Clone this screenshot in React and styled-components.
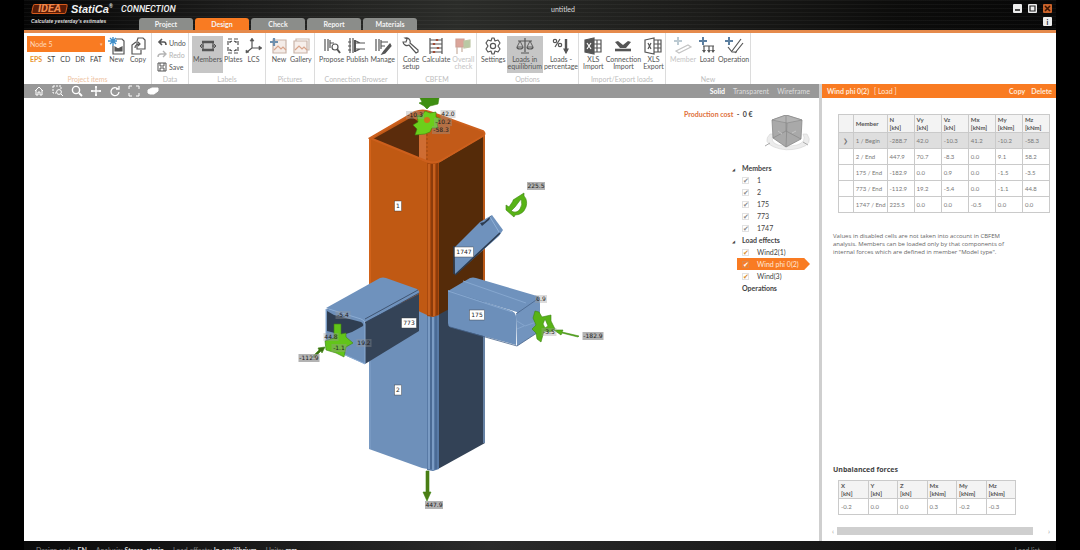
import React, { useState } from "react";
import styled, { createGlobalStyle, css } from "styled-components";

const GlobalStyle = createGlobalStyle`
  * {
    box-sizing: border-box;
  }
  body {
    margin: 0;
    background: #000;
    color: #444;
    font-family: "Lato", "Open Sans", sans-serif;
    font-size: 7px;
    line-height: 8px;
  }
  button, select, input {
    font: inherit;
    color: inherit;
    margin: 0;
    padding: 0;
    border: 0;
    background: none;
  }
`;

/* ---------- icons ---------- */

const Icon = ({ children, w = 18 }) => (
  <svg width={w} height="18" viewBox={`0 0 ${w} 18`} fill="none" stroke="currentColor" strokeWidth="1.2">
    {children}
  </svg>
);

const icons = {
  newItem: (
    <Icon>
      <path d="M8 2h6l2 2v13H5V9" />
      <path d="M7 14v-4l3 2 4-2v4z" fill="currentColor" />
      <path d="M5 0v9M0 4h9M2 1l6 6M8 1L2 7" stroke="#3f8fca" strokeWidth="1.4" />
    </Icon>
  ),
  copy: (
    <Icon>
      <path d="M9 1h5l2 2v9H8V4z" />
      <path d="M7 5L3 8v9h9v-4" />
      <path d="M6 11c0-3 2-4 5-4M9 5l2 2-2 2" />
    </Icon>
  ),
  members: (
    <Icon>
      <path d="M3 5h12M3 13h12" strokeWidth="2.4" />
      <path d="M4 5v8M14 5v8" />
      <path d="M1 9h4M3 7l-2 2 2 2M17 9h-4M15 7l2 2-2 2" strokeWidth="1" />
    </Icon>
  ),
  plates: (
    <Icon>
      <path d="M4 2h10v14H4z" strokeDasharray="4 2" />
      <path d="M6 5l2-1M12 5l-2-1M6 13l2 1M12 13l-2 1M6 4v2M12 4v2M6 12v2M12 12v2" />
    </Icon>
  ),
  lcs: (
    <Icon>
      <path d="M7 2v9M7 11h9M7 11l-5 4" />
      <path d="M5 4l2-3 2 3zM14 9l3 2-3 2zM1 13l3 2-3 1z" fill="currentColor" strokeWidth="0.6" />
    </Icon>
  ),
  newPicture: (
    <Icon>
      <path d="M3 3h13v13H3z" stroke="#c9b3a8" fill="#f4ece8" />
      <path d="M4 13l4-4 3 3 2-2 3 3" stroke="#d9a58c" />
      <path d="M4 1v8M0 5h8" stroke="#6d8fae" strokeWidth="2.2" />
    </Icon>
  ),
  gallery: (
    <Icon>
      <path d="M4 2h13v11H4z" stroke="#c9b9b0" />
      <path d="M2 4h13v12H2z" stroke="#c9b3a8" fill="#f7efeb" />
      <path d="M3 13l4-4 3 3 2-2 3 3" stroke="#d9a58c" />
    </Icon>
  ),
  propose: (
    <Icon>
      <path d="M2 2v12M5 2v12M7 6h4M7 3v8" />
      <circle cx="12" cy="10" r="3" />
      <path d="M14 12l3 4" strokeWidth="2" />
    </Icon>
  ),
  publish: (
    <Icon>
      <path d="M2 1v15M5 1v15" />
      <path d="M7 3v12" strokeWidth="2" />
      <path d="M8 6h9M8 12h9M8 4l4 2M8 14l4-2M0 5h3M0 9h3M0 13h3" />
    </Icon>
  ),
  manage: (
    <Icon>
      <path d="M2 2v12M5 2v12M7 3v9M7 5h7M7 9h4" />
      <path d="M16 7l-6 7-2 3 3-1 6-7z" fill="currentColor" />
    </Icon>
  ),
  code: (
    <Icon>
      <path d="M5 2l-1 3-3 0a4 4 0 0 0 6 3l7 8 2-1 0-2-8-7A4 4 0 0 0 3 1z" />
    </Icon>
  ),
  calculate: (
    <Icon>
      <path d="M3 1v16M15 1v16M3 3h12M3 7h12M3 11h12M3 15h12" />
      <path d="M10 2v2M7 6v2M11 10v2M7 14v2" stroke="#a04a34" strokeWidth="2.4" />
    </Icon>
  ),
  overall: (
    <Icon>
      <path d="M2 2h8v8H2z" fill="#dba59a" stroke="#cda096" />
      <path d="M10 4l6-1v7l-6 1z" fill="#b9c9a4" stroke="#c0c8a8" />
      <path d="M3 10v7M8 10v5" stroke="#c8b0a0" />
    </Icon>
  ),
  settings: (
    <Icon>
      <path d="M8 1h2l1 3 3-1 2 3-2 3 2 3-2 3-3-1-1 3H8l-1-3-3 1-2-3 2-3-2-3 2-3 3 1z" strokeLinejoin="round" />
      <circle cx="9" cy="9" r="2.6" />
    </Icon>
  ),
  equilibrium: (
    <Icon>
      <path d="M9 1v14M5 16h8M2 4h14" />
      <path d="M4 4l-3 6h6zM14 4l-3 6h6z" strokeWidth="0.9" />
      <path d="M1 10a3 2 0 0 0 6 0M11 10a3 2 0 0 0 6 0" />
    </Icon>
  ),
  percentage: (
    <Icon>
      <circle cx="3" cy="4" r="1.7" />
      <circle cx="8" cy="8" r="1.7" />
      <path d="M8 2L3 10" />
      <path d="M14 2v11" strokeWidth="2.4" />
      <path d="M12 12h4l-2 4z" fill="currentColor" />
    </Icon>
  ),
  xlsImport: (
    <Icon>
      <path d="M9 3h8v12H9M9 7h8M9 11h8M13 3v12" />
      <path d="M1 3l9-2v16l-9-2z" fill="currentColor" />
      <path d="M3 6l4 6M7 6l-4 6" stroke="#fff" />
    </Icon>
  ),
  connection: (
    <Icon>
      <path d="M1 5l3-1 5 4 5-4 3 1-5 6H6z" fill="currentColor" stroke="none" />
      <path d="M1 13h16" strokeWidth="2.6" />
    </Icon>
  ),
  xlsExport: (
    <Icon>
      <path d="M10 3h7v12h-7M10 7h7M10 11h7M14 3v12" />
      <path d="M1 3l9-2v16l-9-2z" fill="#fff" />
      <path d="M4 6l3 6M7 6l-3 6" />
    </Icon>
  ),
  member: (
    <Icon w={20}>
      <path d="M5 0v8M1 4h8" stroke="#bccad2" strokeWidth="2" />
      <path d="M3 14l12-6 3 2-12 6z" />
    </Icon>
  ),
  load: (
    <Icon>
      <path d="M5 9h11M6 9v5M11 9v5M15 9v5" />
      <path d="M4 13h4l-2 3zM9 13h4l-2 3zM13 13h4l-2 3z" fill="currentColor" stroke="none" />
      <path d="M5 0v8M1 4h8" stroke="#5c7fa0" strokeWidth="2" />
    </Icon>
  ),
  operation: (
    <Icon w={20}>
      <path d="M17 2L8 14M19 6l-8 10M4 10l4 5h5" />
      <path d="M5 0v8M1 4h8" stroke="#5c7fa0" strokeWidth="2" />
    </Icon>
  ),
};

const smallIcons = {
  undo: <path d="M2 4h5q2 0 2 3M5 1L2 4l3 3" strokeWidth="1.6" />,
  redo: <path d="M8 4H4Q1 4 1 7M6 1l3 3-3 3" strokeWidth="1.4" />,
  save: <path d="M1 1h8v8H1zM3 1v3h4V1M3 9V6h4v3" />,
  home: <path d="M1 5l4-4 4 4M2 4v5h2V6h2v3h2V4" />,
  zoomWindow: (
    <>
      <path d="M0 0h8v4M0 0v7h3" strokeDasharray="2 1" />
      <circle cx="6" cy="6" r="2.4" />
      <path d="M8 8l2 2" />
    </>
  ),
  zoom: (
    <>
      <circle cx="4" cy="4" r="3.6" strokeWidth="1.4" />
      <path d="M7 7l3 3" strokeWidth="1.8" />
    </>
  ),
  pan: <path d="M5 0v10M0 5h10M4 1h2M4 9h2M1 4v2M9 4v2" strokeWidth="1.4" />,
  rotate: <path d="M8 3a4 4 0 1 0 1 3M9 0v3H6" strokeWidth="1.3" />,
  fit: <path d="M0 3V0h3M7 0h3v3M10 7v3H7M3 10H0V7" />,
  clip: <path d="M0 4l4-2 6 0v3L6 8H2L0 7z" fill="currentColor" />,
};

const SmallIcon = ({ name }) => (
  <svg width="10" height="10" viewBox="0 0 10 10" fill="none" stroke="currentColor" overflow="visible">
    {smallIcons[name]}
  </svg>
);

/* ---------- data ---------- */

const groups = [
  {
    title: "Labels",
    width: 77,
    items: [
      { icon: "members", label: "Members", active: true },
      { icon: "plates", label: "Plates" },
      { icon: "lcs", label: "LCS" },
    ],
  },
  {
    title: "Pictures",
    width: 49,
    items: [
      { icon: "newPicture", label: "New" },
      { icon: "gallery", label: "Gallery" },
    ],
  },
  {
    title: "Connection Browser",
    width: 83,
    items: [
      { icon: "propose", label: "Propose" },
      { icon: "publish", label: "Publish" },
      { icon: "manage", label: "Manage" },
    ],
  },
  {
    title: "CBFEM",
    width: 79,
    items: [
      { icon: "code", label: "Code\nsetup" },
      { icon: "calculate", label: "Calculate" },
      { icon: "overall", label: "Overall\ncheck", disabled: true },
    ],
  },
  {
    title: "Options",
    width: 102,
    items: [
      { icon: "settings", label: "Settings" },
      { icon: "equilibrium", label: "Loads in\nequilibrium", active: true },
      { icon: "percentage", label: "Loads -\npercentage" },
    ],
  },
  {
    title: "Import/Export loads",
    width: 87,
    items: [
      { icon: "xlsImport", label: "XLS\nImport" },
      { icon: "connection", label: "Connection\nImport" },
      { icon: "xlsExport", label: "XLS\nExport" },
    ],
  },
  {
    title: "New",
    width: 85,
    items: [
      { icon: "member", label: "Member", disabled: true },
      { icon: "load", label: "Load" },
      { icon: "operation", label: "Operation" },
    ],
  },
];

const loadRows = [
  ["1 / Begin", "-288.7", "42.0", "-10.3", "41.2", "-10.2", "-58.3"],
  ["2 / End", "447.9", "70.7", "-8.3", "0.0", "9.1", "58.2"],
  ["175 / End", "-182.9", "0.0", "0.9", "0.0", "-1.5", "-3.5"],
  ["773 / End", "-112.9", "19.2", "-5.4", "0.0", "-1.1", "44.8"],
  ["1747 / End", "225.5", "0.0", "0.0", "-0.5", "0.0", "0.0"],
];

const loadHeads = [["N", "kN"], ["Vy", "kN"], ["Vz", "kN"], ["Mx", "kNm"], ["My", "kNm"], ["Mz", "kNm"]];
const sumHeads = [["X", "kN"], ["Y", "kN"], ["Z", "kN"], ["Mx", "kNm"], ["My", "kNm"], ["Mz", "kNm"]];
const sums = ["-0.2", "0.0", "0.0", "0.3", "-0.2", "-0.3"];

/* ---------- 3D scene ---------- */

const MemberTag = ({ x, y, children }) => {
  const w = children.length * 4 + 3;
  return (
    <g>
      <rect x={x - w / 2} y={y - 5} width={w} height="10" fill="#fff" stroke="#333" strokeWidth="0.4" />
      <text x={x} y={y + 2} fontSize="6" fill="#222" textAnchor="middle">{children}</text>
    </g>
  );
};

const LoadTag = ({ x, y, bare, children }) => {
  const w = children.length * 3 + 3;
  return (
    <g>
      <rect x={x - w / 2} y={y - 4} width={w} height="8" fill="#9a9a9a" fillOpacity={bare ? 0.35 : 0.75} />
      <text x={x} y={y + 2} fontSize="6" fill="#1c1c1c" textAnchor="middle">{children}</text>
    </g>
  );
};

const Model = () => (
  <Scene viewBox="24 98 656 443" preserveAspectRatio="xMinYMin meet" role="img" aria-label="Connection model">
    {/* column, lower half */}
    <path d="M369 285L433 312V470L422 468L369 449Z" fill="#6e90ba" />
    <path d="M438 314L485 286V443L438 469Z" fill="#334256" />
    <path d="M427 314h12V469l-6 2-6-1z" fill="#587aa6" />
    <path d="M429 315V469M433 316V470" stroke="#8aabd2" strokeWidth="1.4" />
    <path d="M431 315V469M436 315V469" stroke="#3f5c84" />
    <path d="M370 287V449M484 290V443" stroke="#7c9dc6" strokeWidth="1.4" />

    {/* column, upper half */}
    <path d="M369 139L415 112q8-3 15 0L483 131q3 3 1 5L440 162q-7 3-14 0Z" fill="#c25a18" />
    <path d="M373 139L412 117l7 5V158Z" fill="#5b2c0c" />
    <path d="M419 121h7v40l-7-3z" fill="#cf6d33" />
    <path d="M427 134v28" stroke="#8c3f10" strokeDasharray="2 2" strokeWidth="0.7" />
    <path d="M369 138L427 162V315L369 288Z" fill="#c05913" />
    <path d="M438 163L485 135V290L438 315Z" fill="#552b09" />
    <path d="M427 162q6 2 12 0V315l-6 2-6-1z" fill="#a9490d" />
    <path d="M429 164V315M434 164V316" stroke="#dc7029" strokeWidth="1.2" />
    <path d="M432 164V316M437 163V315" stroke="#71300a" />
    <path d="M484 135V282M370 139V288" stroke="#d5651c" strokeWidth="1.6" />
    <path d="M370 138L415 112q8-3 15 0L483 131q3 3 0 5L440 161q-7 3-14 0Z" fill="none" stroke="#cc5f1c" strokeWidth="2" />

    {/* member 773 */}
    <path d="M326 308L380 278q3-1 6 0L417 289q4 3 1 5L366 322Z" fill="#6f92bd" />
    <path d="M365 322L419 294V331L365 364Z" fill="#344357" />
    <path d="M365 319L418 290M367 322L419 293" stroke="#33455f" strokeWidth="0.8" />
    <path d="M326 310q0-2 3-1L361 319q4 1 4 5V364L328 348q-2-1-2-4Z" fill="#6e90ba" />
    <path d="M327 311L334 315 361 322q3 2 2 4L352 332 343 335 327 331Z" fill="#2f3e52" />
    <path d="M326 309V346L365 364V324q0-4-4-5L329 309" fill="none" stroke="#8bacd4" />

    {/* member 175 */}
    <path d="M448 291L470 278q3-1 6 0L537 296q3 2 2 5L520 313Z" fill="#6f92bd" />
    <path d="M448 290L512 311q4 2 4 6V345L450 327q-2-1-2-4Z" fill="#6c8fba" />
    <path d="M516 316q0-4 4-6L537 298q3 1 3 6V331L517 346Z" fill="#7294be" />
    <path d="M517 321l8 5 14-5M517 329l7-3" stroke="#89a9d0" fill="none" strokeWidth="0.8" />
    <path d="M448 291L512 312M463 281L526 303" stroke="#86a7cf" />
    <path d="M516 314L539 298M450 327L517 346 540 331" stroke="#46638a" fill="none" strokeWidth="0.8" />

    {/* member 1747 */}
    <path d="M454 248L480 222 492 215 503 230 499 236 455 275Z" fill="#6f92bd" />
    <path d="M480 223L484 222 491 216 489 220 482 226Z" fill="#2d3c50" />
    <path d="M455 275L500 233M454 246V274" stroke="#2d3c50" strokeWidth="1.6" />
    <path d="M490 217L499 232" stroke="#8fb0d6" />

    {/* loads */}
    <g fill="#58b316" stroke="#3d8410" strokeWidth="0.6">
      <path d="M420 98h19l-1 6-8 2-3 3-3-3-5-3 3-1z" fill="#3f8f12" />
      <path d="M417 115l5 1 3-5 5 2 6-1 0 5 5 2-4 4 1 5-6 0-2 4-5 2-10 1 2-6-4-4 5-3z" fill="#6bcf1b" />
      <path d="M513 200l11-7 0 3q4 4 2 11-3 8-11 8l-1 2-8-7 0-5 3 2 4-6zM521 199l-6 8-4 4q6 3 9-2 3-4 1-10z" fillRule="evenodd" />
      <path d="M334 324h7v10l5-1v4l7 6-7 4-2 10-8-4-10-3-1-9 9-3z" fill="#62c41a" />
      <path d="M313 356l6-6-1-2 7-1-3 6-1-2-7 7z" fill="#3a6f10" />
      <path d="M535 311l4 1 3 5 9-2 0 6 4 8-5 3-6-1-3 11-4-3-1-6-4-4 4-4-3-7zM545 319l-2 5 2 4 3-2z" fillRule="evenodd" />
      <path d="M578 337l-16-4-1 2-7-5 9 0-1 2 17 4z" />
      <path d="M426 471h3v21h2l-4 9-4-9h3z" fill="#4c7d15" />
    </g>
    <circle cx="427" cy="120" r="3" fill="#c97a18" />

    <LoadTag x={415} y={115} bare>-10.3</LoadTag>
    <LoadTag x={443} y={122} bare>-10.2</LoadTag>
    <LoadTag x={448} y={114} bare>42.0</LoadTag>
    <LoadTag x={441} y={130} bare>-58.3</LoadTag>
    <LoadTag x={536} y={186}>225.5</LoadTag>
    <LoadTag x={541} y={299} bare>0.9</LoadTag>
    <LoadTag x={549} y={332} bare>-3.5</LoadTag>
    <LoadTag x={593} y={336}>-182.9</LoadTag>
    <LoadTag x={343} y={315} bare>-5.4</LoadTag>
    <LoadTag x={331} y={337} bare>44.8</LoadTag>
    <LoadTag x={339} y={348} bare>-1.1</LoadTag>
    <LoadTag x={364} y={343} bare>19.2</LoadTag>
    <LoadTag x={309} y={358}>-112.9</LoadTag>
    <LoadTag x={434} y={505}>447.9</LoadTag>

    <MemberTag x={398} y={206}>1</MemberTag>
    <MemberTag x={464} y={252}>1747</MemberTag>
    <MemberTag x={409} y={323}>773</MemberTag>
    <MemberTag x={477} y={315}>175</MemberTag>
    <MemberTag x={398} y={390}>2</MemberTag>
  </Scene>
);

const ViewCube = () => (
  <svg width="46" height="40" viewBox="0 0 46 40" fill="none">
    <path d="M6 19q-8 8 4 13t26 1 7-14l-4 0q4 8-6 11t-19 0-4-11z" fill="#ececec" stroke="#d4d4d4" strokeWidth="0.6" />
    <path d="M1 31l5-3M39 27l5 3" stroke="#aaa" />
    <path d="M8 5L22 0 38 5 37 24 22 32 9 23Z" fill="#a9a9a9" stroke="#888" strokeWidth="0.8" />
    <path d="M8 5L23 8 38 5 22 0Z" fill="#b4b4b4" stroke="#888" strokeWidth="0.6" />
    <path d="M23 8L22 32M22 0V16M9 23L22 16 37 24" stroke="#868686" strokeWidth="0.7" />
    <path d="M14 16l4 3M28 18l4-2" stroke="#c4c4c4" />
  </svg>
);

/* ---------- parts ---------- */

const TreeCheck = ({ label, tone, selected }) => (
  <TreeRow $selected={selected}>
    <Check type="checkbox" defaultChecked $tone={tone} />
    {label}
  </TreeRow>
);

const HeadCells = ({ heads }) =>
  heads.map(([name, unit]) => (
    <th key={name} scope="col">
      {name}
      <br />[{unit}]
    </th>
  ));

const App = () => {
  const [tab, setTab] = useState("Design");

  return (
    <Window>
      <GlobalStyle />
      <Header>
        <TitleRow>
          <Brand>
            <Logo>IDEA</Logo>
            <Statica>StatiCa<sup>®</sup></Statica>
            <Product>CONNECTION</Product>
          </Brand>
          <Title>untitled</Title>
          <Controls>
            <WinButton aria-label="Minimize"><svg width="9" height="9"><path d="M2 6h5" stroke="#222" strokeWidth="1.6" /></svg></WinButton>
            <WinButton aria-label="Maximize"><svg width="9" height="9"><path d="M2 2h5v5H2z" stroke="#222" fill="none" strokeWidth="1.2" /></svg></WinButton>
            <WinButton aria-label="Close" $close><svg width="9" height="9"><path d="M2 2l5 5M7 2L2 7" stroke="#3a1400" strokeWidth="1.6" /></svg></WinButton>
          </Controls>
        </TitleRow>
        <TabRow>
          <Tagline>Calculate yesterday's estimates</Tagline>
          <Tabs>
            {["Project", "Design", "Check", "Report", "Materials"].map((name) => (
              <Tab key={name} $active={tab === name} onClick={() => setTab(name)}>{name}</Tab>
            ))}
          </Tabs>
          <WinButton aria-label="Info">i</WinButton>
        </TabRow>
      </Header>

      <Ribbon>
        <Group $width={128}>
          <GroupBody>
            <NodeBox>
              <NodeSelect aria-label="Project item" defaultValue="Node 5">
                <option>Node 5</option>
              </NodeSelect>
              <Types>
                {["EPS", "ST", "CD", "DR", "FAT"].map((t) => (
                  <TypeButton key={t} $on={t === "EPS"}>{t}</TypeButton>
                ))}
              </Types>
            </NodeBox>
            <Tool>{icons.newItem}<span>New</span></Tool>
            <Tool>{icons.copy}<span>Copy</span></Tool>
          </GroupBody>
          <Caption $warm>Project items</Caption>
        </Group>
        <Group $width={37}>
          <DataList>
            <DataButton><SmallIcon name="undo" />Undo</DataButton>
            <DataButton disabled><SmallIcon name="redo" />Redo</DataButton>
            <DataButton><SmallIcon name="save" />Save</DataButton>
          </DataList>
          <Caption>Data</Caption>
        </Group>
        {groups.map((g) => (
          <Group key={g.title} $width={g.width}>
            <GroupBody>
              {g.items.map((it) => (
                <Tool key={it.label} $active={it.active} disabled={it.disabled}>
                  {icons[it.icon]}
                  <span>{it.label}</span>
                </Tool>
              ))}
            </GroupBody>
            <Caption>{g.title}</Caption>
          </Group>
        ))}
      </Ribbon>

      <Body>
        <View>
          <ViewBar>
            {["home", "zoomWindow", "zoom", "pan", "rotate", "fit", "clip"].map((name) => (
              <BarButton key={name} aria-label={name}><SmallIcon name={name} /></BarButton>
            ))}
            <Modes>
              <Mode $on>Solid</Mode>
              <Mode>Transparent</Mode>
              <Mode>Wireframe</Mode>
            </Modes>
          </ViewBar>
          <Stage>
            <Model />
            <Outline>
              <CostRow>
                <span><Cost>Production cost</Cost><b>&nbsp; - &nbsp;0 €</b></span>
                <ViewCube />
              </CostRow>
              <TreeHead $open>Members</TreeHead>
              {["1", "2", "175", "773", "1747"].map((m) => (
                <TreeCheck key={m} label={m} tone="#8c8c8c" />
              ))}
              <TreeHead $open>Load effects</TreeHead>
              <TreeCheck label="Wind2(1)" tone="#d9902f" />
              <TreeCheck label="Wind phi 0(2)" tone="#fff" selected />
              <TreeCheck label="Wind(3)" tone="#d9902f" />
              <TreeHead>Operations</TreeHead>
            </Outline>
          </Stage>
        </View>

        <Panel>
          <PanelBar>
            <b>Wind phi 0(2)</b>
            <span>[ Load ]</span>
            <PanelActions>
              <button>Copy</button>
              <button>Delete</button>
            </PanelActions>
          </PanelBar>
          <PanelBody>
            <Table>
              <colgroup>
                <MarkCol />
                <NameCol />
              </colgroup>
              <thead>
                <tr>
                  <th />
                  <th scope="col">Member</th>
                  <HeadCells heads={loadHeads} />
                </tr>
              </thead>
              <tbody>
                {loadRows.map((row, i) => (
                  <Row key={row[0]} $current={i === 0}>
                    <td>{i === 0 ? "❯" : ""}</td>
                    {row.map((cell, j) => <td key={j}>{cell}</td>)}
                  </Row>
                ))}
              </tbody>
            </Table>
            <Note>
              Values in disabled cells are not taken into account in CBFEM analysis. Members can be
              loaded only by that components of internal forces which are defined in member "Model type".
            </Note>
            <SumTitle>Unbalanced forces</SumTitle>
            <Table $width="84%">
              <thead>
                <tr><HeadCells heads={sumHeads} /></tr>
              </thead>
              <tbody>
                <tr>{sums.map((s, i) => <td key={i}>{s}</td>)}</tr>
              </tbody>
            </Table>
            <ScrollBar>
              <span>‹</span>
              <Thumb />
              <span>›</span>
            </ScrollBar>
          </PanelBody>
        </Panel>
      </Body>

      <Status>
        <span>Design code: <b>EN</b></span>
        <span>Analysis: <b>Stress, strain</b></span>
        <span>Load effects: <b>In equilibrium</b></span>
        <span>Units: <b>mm</b></span>
        <StatusEnd>Load list</StatusEnd>
      </Status>
    </Window>
  );
};

export default App;

/* ---------- styles ---------- */

const Window = styled.div`
  height: 100vh;
  display: flex;
  flex-direction: column;
  padding: 0 24px;
  background: #000;
  overflow: hidden;
`;

const Header = styled.header`
  background:
    repeating-linear-gradient(rgba(255, 255, 255, 0.04) 0 1px, transparent 1px 4px),
    linear-gradient(90deg, #050505, #1c1c1b 20%, #2b2c29 42%, #1c1c1a 65%, #0c0c0b 85%, #070707);
  border-bottom: 3px solid #e58a4c;
`;

const TitleRow = styled.div`
  display: flex;
  align-items: center;
  height: 17px;
`;

const Brand = styled.div`
  display: flex;
  align-items: center;
  width: 155px;
  padding-left: 8px;
  color: #f2f2f2;
  white-space: nowrap;
`;

const Logo = styled.span`
  position: relative;
  z-index: 0;
  width: 35px;
  margin-right: 4px;
  text-align: center;
  font: italic bold 11px/10px "Roboto", sans-serif;
  color: #f08a4e;
  &::before {
    content: "";
    position: absolute;
    z-index: -1;
    inset: 0;
    background: #5a1c06;
    border: 1px solid #d65a1c;
    border-radius: 2px;
    transform: skewX(-12deg);
  }
`;

const Statica = styled.span`
  width: 50px;
  font: italic bold 11px/12px "Liberation Sans", sans-serif;
  & sup {
    font-size: 5px;
    line-height: 5px;
  }
`;

const Product = styled.span`
  font: italic 500 9px/12px "Roboto", sans-serif;
`;

const Title = styled.div`
  flex: 1;
  text-align: center;
  color: #ddd;
  font-size: 7px;
`;

const Controls = styled.div`
  display: flex;
  justify-content: flex-end;
  gap: 6px;
  width: 109px;
  padding-right: 4px;
`;

const WinButton = styled.button`
  display: grid;
  place-items: center;
  width: 9px;
  height: 9px;
  border-radius: 1px;
  color: #222;
  font-weight: bold;
  background: ${({ $close }) => ($close ? "#c9622a" : "#ececec")};
`;

const TabRow = styled.div`
  display: flex;
  align-items: flex-end;
  height: 13px;
  padding-right: 4px;
  & > ${WinButton} {
    margin: 0 0 4px auto;
  }
`;

const Tagline = styled.div`
  width: 115px;
  padding: 0 0 5px 7px;
  font: italic bold 5px/8px "Liberation Sans", sans-serif;
  color: #ddd;
  white-space: nowrap;
`;

const Tabs = styled.nav`
  display: flex;
  gap: 2px;
`;

const Tab = styled.button`
  width: 54px;
  height: 12px;
  border-radius: 3px 3px 0 0;
  font-weight: bold;
  color: #f4f4f4;
  background: ${({ $active }) => ($active ? "#f97b22" : "#8b8d8a")};
`;

const Ribbon = styled.div`
  display: flex;
  height: 51px;
  background: #fff;
`;

const Group = styled.section`
  display: flex;
  flex-direction: column;
  justify-content: space-between;
  width: ${({ $width }) => $width}px;
  padding: 3px 3px 1px;
  border-right: 1px solid #dcdcdc;
`;

const GroupBody = styled.div`
  display: flex;
  justify-content: space-between;
`;

const Caption = styled.div`
  text-align: center;
  white-space: nowrap;
  color: ${({ $warm }) => ($warm ? "#eec3a2" : "#bdbdbd")};
`;

const Tool = styled.button`
  display: flex;
  flex-direction: column;
  align-items: center;
  gap: 1px;
  height: 37px;
  padding: 1px 1px 0;
  line-height: 7px;
  white-space: pre;
  color: #555;
  ${({ $active }) => $active && css`
    background: #c6c6c6;
  `}
  &:disabled {
    color: #c4c4c4;
  }
`;

const NodeBox = styled.div`
  position: relative;
  width: 78px;
  &::after {
    content: "▾";
    position: absolute;
    top: 4px;
    right: 2px;
    color: #ffc59b;
    font-size: 5px;
    pointer-events: none;
  }
`;

const NodeSelect = styled.select`
  appearance: none;
  display: block;
  width: 100%;
  height: 16px;
  padding: 0 3px;
  color: #ffd9bd;
  background: #f97b22;
`;

const Types = styled.div`
  display: flex;
  justify-content: space-between;
  padding: 3px 3px 0;
`;

const TypeButton = styled.button`
  color: ${({ $on }) => ($on ? "#e8952f" : "#444")};
  font-weight: ${({ $on }) => ($on ? 700 : 400)};
`;

const DataList = styled.div`
  display: flex;
  flex-direction: column;
  gap: 2px;
  padding: 2px 0 0 2px;
`;

const DataButton = styled.button`
  display: flex;
  align-items: center;
  gap: 2px;
  height: 10px;
  color: #555;
  &:disabled {
    color: #b4b4b4;
  }
`;

const Body = styled.div`
  flex: 1;
  display: flex;
  min-height: 0;
  background: #fff;
`;

const View = styled.main`
  flex: 1;
  display: flex;
  flex-direction: column;
  min-width: 0;
`;

const ViewBar = styled.div`
  display: flex;
  align-items: center;
  gap: 9px;
  height: 14px;
  padding: 0 9px 0 10px;
  color: #fff;
  background: #989898;
`;

const BarButton = styled.button`
  display: grid;
`;

const Modes = styled.div`
  display: flex;
  gap: 8px;
  margin-left: auto;
`;

const Mode = styled.button`
  color: ${({ $on }) => ($on ? "#fff" : "#dedede")};
  font-weight: ${({ $on }) => ($on ? 700 : 400)};
`;

const Stage = styled.div`
  flex: 1;
  display: flex;
  min-height: 0;
`;

const Scene = styled.svg`
  flex: 1;
  min-width: 0;
  height: 100%;
  font-family: "DejaVu Sans", sans-serif;
`;

const Outline = styled.aside`
  width: 139px;
  padding: 12px 9px 0 4px;
`;

const CostRow = styled.div`
  display: flex;
  justify-content: space-between;
  height: 52px;
  white-space: nowrap;
  & svg {
    margin-top: 5px;
  }
`;

const Cost = styled.span`
  color: #e0703a;
  font-weight: bold;
`;

const TreeHead = styled.div`
  height: 12px;
  line-height: 12px;
  font-weight: bold;
  color: #444;
  &::before {
    content: "${({ $open }) => ($open ? "◢" : "")}";
    display: inline-block;
    width: 10px;
    margin-left: 48px;
    font: 4px/12px "DejaVu Sans", sans-serif;
  }
`;

const TreeRow = styled.label`
  display: flex;
  align-items: center;
  gap: 8px;
  height: 12px;
  margin-left: 53px;
  padding-left: 5px;
  ${({ $selected }) => $selected && css`
    color: #ffe9d9;
    background: #f97b22;
    clip-path: polygon(0 0, 92% 0, 100% 50%, 92% 100%, 0 100%);
  `}
`;

const Check = styled.input`
  appearance: none;
  display: grid;
  place-items: center;
  width: 7px;
  height: 7px;
  border: 1px solid rgba(160, 160, 160, 0.3);
  color: ${({ $tone }) => $tone};
  &:checked::before {
    content: "✔";
    font: 7px/7px "DejaVu Sans", sans-serif;
  }
`;

const Panel = styled.aside`
  display: flex;
  flex-direction: column;
  width: 237px;
  border-left: 3px solid #cfcfcf;
`;

const PanelBar = styled.div`
  display: flex;
  align-items: center;
  gap: 5px;
  height: 14px;
  padding: 0 4px 0 5px;
  color: #ffe9d9;
  background: #f97b22;
`;

const PanelActions = styled.div`
  display: flex;
  gap: 6px;
  margin-left: auto;
  font-weight: bold;
`;

const PanelBody = styled.div`
  flex: 1;
  display: flex;
  flex-direction: column;
  padding: 16px 6px 5px 16px;
`;

const Table = styled.table`
  width: ${({ $width }) => $width || "100%"};
  table-layout: fixed;
  border-collapse: collapse;
  border: 1px solid #aaa;
  color: #777;
  & th, & td {
    padding: 0 0 0 2px;
    border: 1px solid #cacaca;
    text-align: left;
    font-size: 6px;
    line-height: 8px;
    white-space: nowrap;
  }
  & th {
    height: 18px;
    color: #555;
    background: #f3f3f3;
  }
  & td {
    height: 16px;
  }
`;

const MarkCol = styled.col`
  width: 7%;
`;

const NameCol = styled.col`
  width: 16%;
`;

const Row = styled.tr`
  background: ${({ $current }) => ($current ? "#dedede" : "#fff")};
  & td:first-child {
    padding: 0;
    text-align: center;
  }
`;

const Note = styled.p`
  width: 184px;
  margin: 19px 0 0 -5px;
  font: 6px/8px "Open Sans", sans-serif;
  color: #666;
`;

const SumTitle = styled.h2`
  margin: auto 0 6px -5px;
  font: bold 7px/8px "Open Sans", sans-serif;
`;

const ScrollBar = styled.div`
  display: flex;
  align-items: center;
  gap: 3px;
  height: 10px;
  margin: 11px 0 0 -6px;
  color: #999;
`;

const Thumb = styled.div`
  width: 90%;
  height: 8px;
  margin-right: auto;
  background: #cfcfcf;
`;

const Status = styled.footer`
  display: flex;
  gap: 9px;
  height: 9px;
  padding: 5px 16px 0 12px;
  overflow: hidden;
  white-space: nowrap;
  color: #888;
  background: linear-gradient(90deg, #0a0a0a, #2a2a2a 45%, #0a0a0a);
  & b {
    color: #ddd;
  }
`;

const StatusEnd = styled.span`
  margin-left: auto;
`;
